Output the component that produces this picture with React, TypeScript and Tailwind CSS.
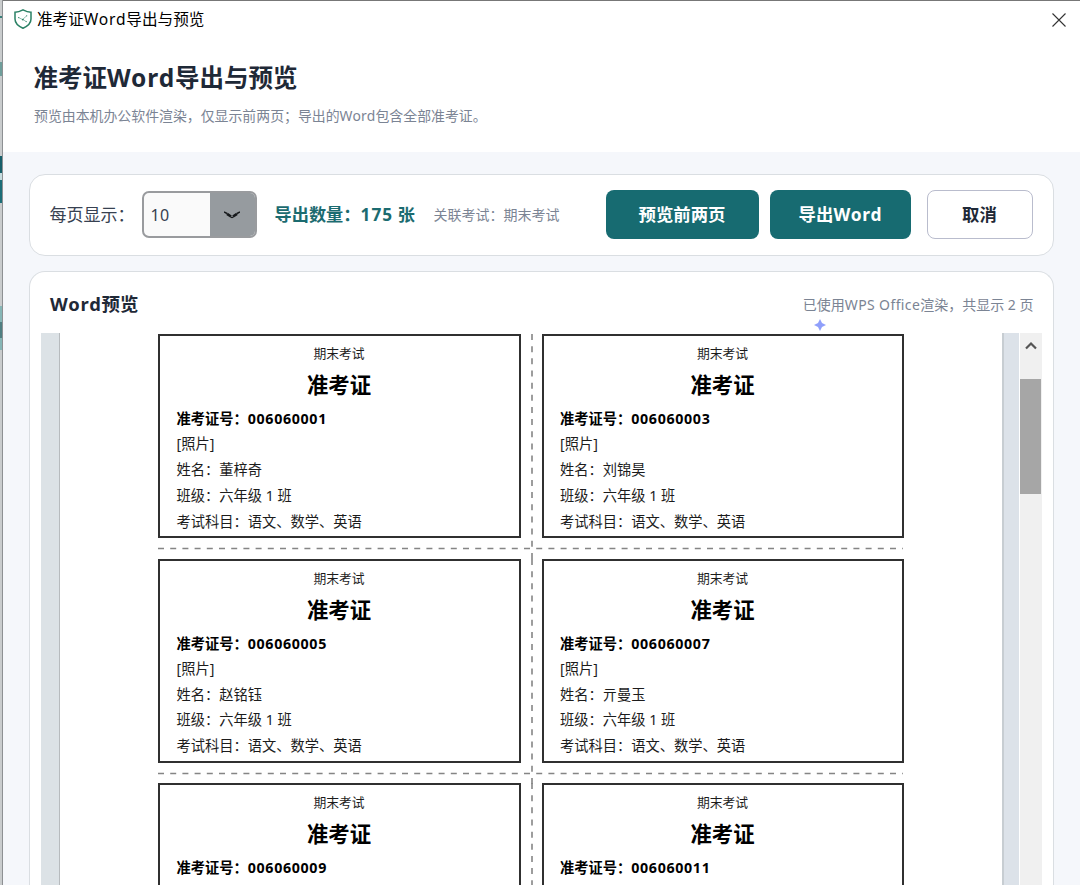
import React from "react";

type Ticket = { no: string; name?: string };

const rows: Ticket[][] = [
  [{ no: "006060001", name: "董梓奇" }, { no: "006060003", name: "刘锦昊" }],
  [{ no: "006060005", name: "赵铭钰" }, { no: "006060007", name: "亓曼玉" }],
  [{ no: "006060009" }, { no: "006060011" }],
];

function TicketCard({ ticket }: { ticket: Ticket }) {
  return (
    <div className="min-w-0 flex-1 overflow-hidden border-2 border-[#303030] pl-[16.5px] pr-[17px] pt-[5px] text-[14.25px] leading-[25.7px] text-[#1c1c1c]">
      <div className="text-center text-[12.8px] leading-[24px]">期末考试</div>
      <div className="mb-[2px] mt-px text-center text-[21.4px] font-bold leading-[38px] text-black">准考证</div>
      <div className="font-bold leading-[25.2px] text-black">
        准考证号：<span className="tracking-[0.65px]">{ticket.no}</span>
      </div>
      {ticket.name && (
        <>
          <div>[照片]</div>
          <div>姓名：{ticket.name}</div>
          <div className="leading-[26px]">班级：六年级 1 班</div>
          <div>考试科目：语文、数学、英语</div>
        </>
      )}
    </div>
  );
}

function VerticalCut() {
  return (
    <svg className="h-full w-[21px] shrink-0" viewBox="0 0 21 225" fill="none">
      <path d="M11 0V225" stroke="#858585" strokeWidth="1.6" strokeDasharray="6 6.16" />
    </svg>
  );
}

function HorizontalCut() {
  return (
    <svg className="block h-[21px] w-[746px]" viewBox="0 0 746 21" fill="none">
      <path d="M0 10.5H745" stroke="#858585" strokeWidth="1.6" strokeDasharray="6 6.2" />
    </svg>
  );
}

export default function App() {
  return (
    <div className="flex h-[885px] w-[1080px] overflow-hidden bg-[#f5f7fb] [font-family:'Noto_Sans','Noto_Sans_CJK_SC',sans-serif]">
      <div className="flex w-[3px] shrink-0 flex-col border-r border-[#8d9093] bg-[#c9cccd]">
        <div className="h-[16px]" />
        <div className="h-[2px] bg-[#397f79]" />
        <div className="h-[44px]" />
        <div className="h-[14px] bg-[#6f9e9b]" />
        <div className="h-[80px]" />
        <div className="h-[17px] bg-[#175f6a]" />
        <div className="h-[7px] bg-[#c5dcdf]" />
        <div className="h-[23px] bg-[#1c6e78]" />
        <div className="h-[103px]" />
        <div className="h-[16px] bg-[#86b6b6]" />
        <div className="h-[16px] bg-[#4f7f82]" />
        <div className="h-[12px] bg-[#86b6b6]" />
      </div>
      <main className="flex min-w-0 flex-1 flex-col border-t border-[#777]">
        <header className="h-[151px] shrink-0 bg-white">
          <div className="flex h-[37px] items-center pl-[10px] pr-[14px]">
            <svg className="-mt-px size-5 shrink-0" viewBox="0 0 20 20" fill="none" stroke="#298064">
              <path d="M10 .8C7.3 2.3 4.5 3.2 2 3.2V10c0 4.2 3.2 7.1 8 9.2 4.8-2.1 8-5 8-9.2V3.2c-2.5 0-5.3-.9-8-2.4Z" strokeWidth="1.5" />
              <path d="M5.5 8.5 9.5 10.500 13.500 7M10 10.500l3 2" strokeWidth=".5" />
              <g fill="#298064" stroke="none">
                <circle cx="5.700" cy="8.600" r=".6" />
                <circle cx="9.800" cy="10.600" r=".9" />
                <circle cx="13.700" cy="6.800" r=".6" />
                <circle cx="13.200" cy="12.600" r=".6" />
              </g>
            </svg>
            <span className="ml-1 whitespace-nowrap text-[15.6px] text-black">
              准考证<span className="tracking-[0.8px]">Word</span>导出与预览
            </span>
            <svg className="ml-auto size-[14px]" viewBox="0 0 14 14" stroke="#333" strokeWidth="1.1">
              <path d="m.5.5 13 13m0-13-13 13" />
            </svg>
          </div>
          <h1 className="mt-[22px] pl-[30.5px] text-[24.5px] font-bold leading-9 text-[#1f2937]">
            准考证<span className="tracking-[0.9px]">Word</span>导出与预览
          </h1>
          <p className="mt-[10px] pl-[31px] text-[13.9px] leading-5 text-[#7b8494]">
            预览由本机办公软件渲染，仅显示前两页；导出的<span className="tracking-[0.2px]">Word</span>包含全部准考证。
          </p>
        </header>

        <section className="ml-[26px] mt-[22px] flex h-[82px] w-[1025px] shrink-0 items-center rounded-[16px] border-[1.5px] border-[#dadee2] bg-white pb-px pl-[19.5px] pr-[20.5px]">
          <span className="w-[92px] text-[17px] text-[#374151]">每页显示：</span>
          <div className="flex h-[47px] w-[115px] overflow-hidden rounded-[7px] border-2 border-[#999b9e] bg-[#fafafa]">
            <span className="flex w-[66px] items-center pl-[7px] text-[16px] tracking-[0.3px] text-[#374151]">10</span>
            <span className="flex flex-1 items-center justify-center bg-[#969b9f]">
              <svg width="16" height="8" viewBox="0 0 16 8" fill="none" stroke="#16191b">
                <path d="m0 1 3 1.5M16 1l-3 1.5" strokeWidth="1.4" />
                <path d="m3 2.8 4 2.7M13 2.8 9 5.5" strokeWidth="2.6" />
                <path d="M6.500 6 8 6.500 9.500 6" strokeWidth="1.2" />
              </svg>
            </span>
          </div>
          <span className="ml-[18px] w-[159px] whitespace-nowrap text-[17.2px] font-bold text-[#1b6b70]">
            导出数量：<span className="tracking-[1.1px]">175</span><span> 张</span>
          </span>
          <span className="text-[14px] text-[#7b8494]">关联考试：期末考试</span>
          <div className="ml-auto flex">
            <button className="h-[49px] w-[153px] rounded-[8px] bg-[#176b71] text-[17.4px] font-bold text-white">预览前两页</button>
            <button className="ml-[11.5px] h-[49px] w-[141px] rounded-[8px] bg-[#176b71] text-[17.4px] font-bold text-white">
              导出<span className="tracking-[0.8px]">Word</span>
            </button>
            <button className="ml-[15.5px] h-[49px] w-[106px] rounded-[8px] border-[1.5px] border-[#b9bccd] bg-white text-[17.4px] font-bold text-[#1f2937]">取消</button>
          </div>
        </section>

        <section className="ml-[26px] mt-[15px] flex h-[614px] w-[1025px] shrink-0 flex-col rounded-t-[16px] border-x border-t border-[#dadee2] bg-white">
          <div className="relative flex h-[61px] shrink-0 items-center justify-between pl-[20px] pr-[19.5px] pt-[3px]">
            <h2 className="text-[18.4px] font-bold text-[#1f2937]">
              <span className="tracking-[0.8px]">Word</span>预览
            </h2>
            <span className="text-[14px] text-[#7b8494]">
              已使用<span className="tracking-[0.38px]">WPS Office</span>渲染，共显示 2 页
            </span>
            <svg className="absolute left-[784px] top-[47px]" width="12" height="12" viewBox="0 0 12 12">
              <path d="M6 0 8 4 12 6 8 8 6 12 4 8 0 6 4 4Z" fill="#8f9ffb" />
            </svg>
          </div>
          <div className="ml-[11px] flex min-h-0 w-[1001px] flex-1">
            <div className="w-[19px] border-r border-[#b7bbbe] bg-[#dce2e6]" />
            <div className="w-[942px] overflow-hidden pl-[98px] pt-px">
              {rows.map((pair, i) => (
                <div key={i} className="h-[224.6px]">
                  <div className="flex h-[204px] w-[746px]">
                    <TicketCard ticket={pair[0]} />
                    <div className="h-[225px] shrink-0"><VerticalCut /></div>
                    <TicketCard ticket={pair[1]} />
                  </div>
                  <HorizontalCut />
                </div>
              ))}
            </div>
            <div className="w-[17px] border-l-2 border-[#c7cdd2] bg-[#dce2e9]" />
            <div className="ml-px flex w-[22px] flex-col bg-[#f0f0f0]">
              <div className="flex h-[46px] justify-center pt-[8px]">
                <svg width="12" height="10" viewBox="0 0 12 10" fill="none" stroke="#555" strokeWidth="2.2">
                  <path d="m1 7.5 5-5 5 5" />
                </svg>
              </div>
              <div className="h-[115px] w-[21px] bg-[#a6a6a6]" />
            </div>
          </div>
        </section>
      </main>
    </div>
  );
}
